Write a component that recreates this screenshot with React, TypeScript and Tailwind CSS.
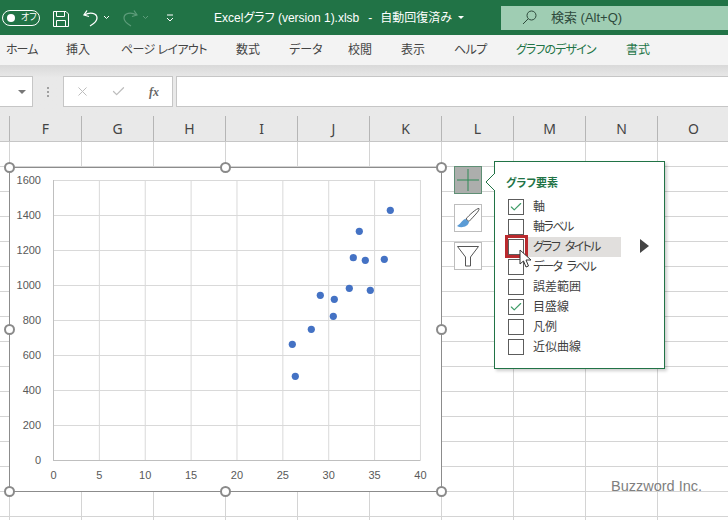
import React from 'react';
import { X, Check } from 'lucide-react';

const TABS = [
  { label: 'ホーム', width: 'w-[31px]', spacing: 'tracking-[-1px]', green: false },
  { label: '挿入', width: 'w-[26px]', spacing: '', green: false },
  { label: 'ページ レイアウト', width: 'w-[86px]', spacing: 'tracking-[-0.6px]', green: false },
  { label: '数式', width: 'w-[24px]', spacing: '', green: false },
  { label: 'データ', width: 'w-[30px]', spacing: '', green: false },
  { label: '校閲', width: 'w-[24px]', spacing: '', green: false },
  { label: '表示', width: 'w-[24px]', spacing: '', green: false },
  { label: 'ヘルプ', width: 'w-[33px]', spacing: 'tracking-[-0.6px]', green: false },
  { label: 'グラフのデザイン', width: 'w-[81px]', spacing: 'tracking-[-0.9px]', green: true },
  { label: '書式', width: 'w-[26px]', spacing: '', green: true },
];

const COLUMNS = ['F', 'G', 'H', 'I', 'J', 'K', 'L', 'M', 'N', 'O'];
const ROWS = Array.from({ length: 16 }, (_, i) => i);

const CHART_ITEMS = [
  { label: '軸', checked: true, spacing: '' },
  { label: '軸ラベル', checked: false, spacing: 'tracking-[-1.5px]' },
  { label: 'グラフ タイトル', checked: false, active: true, spacing: 'tracking-[-1.7px] [word-spacing:4px]' },
  { label: 'データ ラベル', checked: false, spacing: 'tracking-[-1.8px] [word-spacing:4px]' },
  { label: '誤差範囲', checked: false, spacing: '' },
  { label: '目盛線', checked: true, spacing: '' },
  { label: '凡例', checked: false, spacing: '' },
  { label: '近似曲線', checked: false, spacing: '' },
];

const HANDLES = [
  'left-[-6px] top-[-6px]',
  'left-[210px] top-[-6px]',
  'left-[426px] top-[-6px]',
  'left-[-6px] top-[156px]',
  'left-[426px] top-[156px]',
  'left-[-6px] top-[318px]',
  'left-[210px] top-[318px]',
  'left-[426px] top-[318px]',
];

// chart coordinates relative to the chart's box (x - 10, y - 168)
const POINTS = [
  [380.3, 42.3], [349.3, 63.3], [343.3, 89.7], [355.3, 92.3], [374.3, 91.3],
  [339.3, 120.3], [360.3, 122.3], [310.3, 127.3], [324.3, 131.3], [323.3, 148.3],
  [301.3, 161.3], [282.3, 176.3], [285.3, 208.3],
];
const Y_LABELS = ['1600', '1400', '1200', '1000', '800', '600', '400', '200', '0'];
const X_LABELS = ['0', '5', '10', '15', '20', '25', '30', '35', '40'];

const ChartPlot = () => (
  <svg width="431" height="323" className="block" fontFamily="'Liberation Sans', sans-serif">
    {Y_LABELS.map((label, i) => (
      <g key={label}>
        <line x1="43" x2="410.5" y1={12.5 + i * 35} y2={12.5 + i * 35} stroke={i === 8 ? '#bfbfbf' : '#d9d9d9'} />
        <text x="31" y={16 + i * 35} textAnchor="end" fontSize="11" fill="#595959">{label}</text>
      </g>
    ))}
    {X_LABELS.map((label, i) => (
      <g key={label}>
        <line x1={43.5 + i * 45.87} x2={43.5 + i * 45.87} y1="12" y2="292" stroke={i === 0 ? '#bfbfbf' : '#d9d9d9'} />
        <text x={43.5 + i * 45.87} y="311" textAnchor="middle" fontSize="11" fill="#595959">{label}</text>
      </g>
    ))}
    {POINTS.map(([x, y]) => (
      <circle key={`${x}-${y}`} cx={x} cy={y} r="3.6" fill="#4472c4" />
    ))}
  </svg>
);

const ChartObject = () => (
  <div className="absolute left-[9px] top-[167px] h-[325px] w-[433px] border border-[#8c8c8c] bg-white">
    <ChartPlot />
    {HANDLES.map((pos) => (
      <span
        key={pos}
        className={`absolute ${pos} h-[11px] w-[11px] rounded-full border-2 border-[#8a8a8a] bg-white`}
      />
    ))}
  </div>
);

const SideButtons = () => (
  <div className="absolute left-[454px] top-[166px] flex w-[28px] flex-col gap-[10px]">
    <div className="flex h-[28px] items-center justify-center border border-[#5f8f75] bg-[#acaeac]">
      <svg width="24" height="24" viewBox="0 0 24 24">
        <path d="M12 1v22M1 12h22" stroke="#2f8a57" strokeWidth="1" fill="none" />
      </svg>
    </div>
    <div className="flex h-[28px] items-center justify-center border border-[#bdbdbd] bg-white">
      <svg width="26" height="26" viewBox="0 0 26 26">
        <path d="M24 3.5 C22 3 14 10 11 14 L14 16.5 C18 12 25 5.5 24 3.5Z" fill="#fff" stroke="#555" strokeWidth="1" />
        <path d="M10.5 14 C7 14.5 7 18 2 21 C6 23.5 13 22 14 17 Z" fill="#5b9bd5" />
      </svg>
    </div>
    <div className="flex h-[28px] items-center justify-center border border-[#bdbdbd] bg-white">
      <svg width="26" height="26" viewBox="0 0 26 26">
        <path d="M2.5 3.5h21L15.5 14v9h-5v-9z" fill="#fff" stroke="#555" strokeWidth="1" />
      </svg>
    </div>
  </div>
);

const ChartElementsPopup = () => (
  <div className="absolute left-[494px] top-[161px] h-[208px] w-[171px] border border-[#217346] bg-white pl-[13px] pt-[13px] shadow-[2px_2px_3px_rgba(0,0,0,0.2)]">
    <svg width="10" height="18" viewBox="0 0 10 18" className="absolute left-[-10px] top-[11px]">
      <path d="M10 0 L1 9 L10 18" fill="#fff" stroke="#217346" strokeWidth="1" />
    </svg>
    <div className="-ml-[2px] h-[16px] text-[11px] font-bold leading-[16px] text-[#217346]">グラフ要素</div>
    <div className="mt-[6px] flex flex-col">
      {CHART_ITEMS.map((item) => (
        <div key={item.label} className="flex h-[20px] items-center">
          <span className="flex h-[16px] w-[16px] shrink-0 items-center justify-center border border-[#5c5c5c] bg-white">
            {item.checked && <Check size={14} strokeWidth={2} color="#3f9c68" />}
          </span>
          <span
            className={`ml-[2px] flex h-[20px] w-[95px] items-center whitespace-pre pl-[7px] text-[12px] text-[#3f3f3f] ${item.spacing} ${
              item.active ? 'bg-[#e1dfdd]' : ''
            }`}
          >
            {item.label}
          </span>
        </div>
      ))}
    </div>
    <span className="absolute left-[145px] top-[77px] h-0 w-0 border-y-[7px] border-l-[9px] border-y-transparent border-l-[#444444]" />
    <span className="absolute left-[10px] top-[73px] h-[23px] w-[23px] border-[3px] border-[#b92a2e]" />
    <svg width="14" height="20" viewBox="0 0 14 20" className="absolute left-[24px] top-[87px]">
      <path d="M1 1 L1 15 L4.5 12 L7 18 L9.5 17 L7 11 L12 11 Z" fill="#fff" stroke="#333" strokeWidth="1" />
    </svg>
  </div>
);

const TitleBar = () => (
  <div className="flex h-[35px] shrink-0 items-center bg-[#217346] text-white">
    <div className="ml-[2px] flex h-[16px] w-[38px] items-center rounded-full border border-white pl-[4px]">
      <span className="h-[8px] w-[8px] rounded-full bg-white" />
      <span className="ml-[6px] text-[9px] leading-none">オフ</span>
    </div>
    <svg width="18" height="18" viewBox="0 0 18 18" className="ml-[12px] mt-[2px]" fill="none" stroke="#fff" strokeWidth="1">
      <path d="M1.5 1.5h12.5l2.5 2.5v12.5h-15z" />
      <path d="M4.5 1.5v5h8v-5M4.5 16.5v-6h9v6" />
    </svg>
    <svg width="18" height="18" viewBox="0 0 18 18" className="ml-[12px] mt-[1px]" fill="none" stroke="#fff" strokeWidth="1.3">
      <path d="M5 1.5 L2 6 L7 7.5" />
      <path d="M2.5 6 C8 2.5 15 4 15 9 C15 12.5 11.5 15 8 17" />
    </svg>
    <svg width="7" height="5" viewBox="0 0 7 5" className="ml-[3px]" fill="none" stroke="#fff" strokeWidth="1">
      <path d="M1 1l2.5 2.5L6 1" />
    </svg>
    <svg width="18" height="18" viewBox="0 0 18 18" className="ml-[11px] mt-[1px]" fill="none" stroke="#5d9c7a" strokeWidth="1.2">
      <path d="M13 1.5 L16 6 L11 7.5" />
      <path d="M15.5 6 C10 2.5 3 4 3 9 C3 12.5 6.5 15 10 17" />
    </svg>
    <svg width="7" height="5" viewBox="0 0 7 5" className="ml-[3px]" fill="none" stroke="#5d9c7a" strokeWidth="1">
      <path d="M1 1l2.5 2.5L6 1" />
    </svg>
    <svg width="8" height="8" viewBox="0 0 8 8" className="ml-[17px]" fill="none" stroke="#fff" strokeWidth="1">
      <path d="M1 1h6M1 4l3 3 3-3" />
    </svg>
    <div className="ml-[40px] flex w-[287px] items-center whitespace-nowrap text-[12px]">
      <span>Excelグラフ (version 1).xlsb</span>
      <span className="ml-[9px]">-</span>
      <span className="ml-[8px]">自動回復済み</span>
      <span className="ml-[6px] h-0 w-0 border-x-[3px] border-t-[3px] border-x-transparent border-t-white" />
    </div>
    <div className="flex h-[24px] flex-1 items-center bg-[#9fcdb3] pl-[21px] text-[13px] text-[#2e4a3c]">
      <svg width="15" height="15" viewBox="0 0 15 15" fill="none" stroke="#2e4a3c" strokeWidth="1">
        <circle cx="9.5" cy="5.5" r="4.5" />
        <path d="M6.3 8.7L1 14" />
      </svg>
      <span className="ml-[14px]">検索 (Alt+Q)</span>
    </div>
  </div>
);

const RibbonTabs = () => (
  <div className="flex h-[30px] shrink-0 items-center gap-[29px] bg-[#f3f3f3] pl-[6px] text-[12px]">
    {TABS.map((tab) => (
      <span
        key={tab.label}
        className={`${tab.width} whitespace-nowrap ${tab.spacing} ${tab.green ? 'text-[#217346]' : 'text-[#444444]'}`}
      >
        {tab.label}
      </span>
    ))}
  </div>
);

const FormulaBar = () => (
  <div className="flex h-[51px] shrink-0 flex-col bg-linear-to-b from-[#d9d9d9] via-[#e9e9e9] via-[25%] to-[#e9e9e9] pt-[11px]">
    <div className="flex h-[31px] items-stretch">
      <div className="flex w-[33px] items-center justify-end border-y border-r border-[#c6c6c6] bg-white pr-[6px]">
        <span className="h-0 w-0 border-x-[4px] border-t-[4px] border-x-transparent border-t-[#777777]" />
      </div>
      <div className="flex w-[30px] flex-col items-center justify-center gap-[2px]">
        <span className="h-[2px] w-[2px] bg-[#a0a0a0]" />
        <span className="h-[2px] w-[2px] bg-[#a0a0a0]" />
        <span className="h-[2px] w-[2px] bg-[#a0a0a0]" />
      </div>
      <div className="flex w-[110px] items-center border border-[#c6c6c6] bg-white">
        <X size={15} strokeWidth={1.6} color="#bdbdbd" className="ml-[11px]" />
        <Check size={15} strokeWidth={2} color="#bdbdbd" className="ml-[21px]" />
        <span className="ml-[23px] font-['Liberation_Serif',serif] text-[12px] font-bold italic text-[#666666]">fx</span>
      </div>
      <div className="ml-[3px] flex-1 border-y border-l border-[#c6c6c6] bg-white" />
    </div>
  </div>
);

const ColumnHeader = () => (
  <div className="flex h-[26px] shrink-0 border-b border-[#c6c6c6] bg-[#e9e9e9] font-['Noto_Sans',sans-serif] text-[14px] text-[#444444]">
    <div className="w-[10px] shrink-0 border-r border-[#b5b5b5]" />
    {COLUMNS.map((col) => (
      <div key={col} className="flex w-[72px] shrink-0 items-center justify-center border-r border-[#b5b5b5] leading-none">
        {col}
      </div>
    ))}
  </div>
);

const Sheet = () => (
  <div className="min-h-0 flex-1 overflow-hidden bg-white">
    {ROWS.map((row) => (
      <div key={row} className="flex h-[25px] border-b border-[#d4d4d4]">
        <div className="w-[10px] shrink-0 border-r border-[#d4d4d4]" />
        {COLUMNS.map((col) => (
          <div key={col} className="w-[72px] shrink-0 border-r border-[#d4d4d4]" />
        ))}
      </div>
    ))}
  </div>
);

export default function App() {
  return (
    <div className="relative flex h-[520px] w-[728px] flex-col overflow-hidden bg-white font-['Liberation_Sans','Noto_Sans_CJK_JP',sans-serif] [font-feature-settings:'palt']">
      <TitleBar />
      <RibbonTabs />
      <FormulaBar />
      <ColumnHeader />
      <Sheet />
      <ChartObject />
      <SideButtons />
      <ChartElementsPopup />
      <span className="absolute left-[611px] top-[477px] font-['Liberation_Sans',sans-serif] text-[14.5px] leading-[18px] text-[#7f7f7f]">
        Buzzword Inc.
      </span>
    </div>
  );
}
